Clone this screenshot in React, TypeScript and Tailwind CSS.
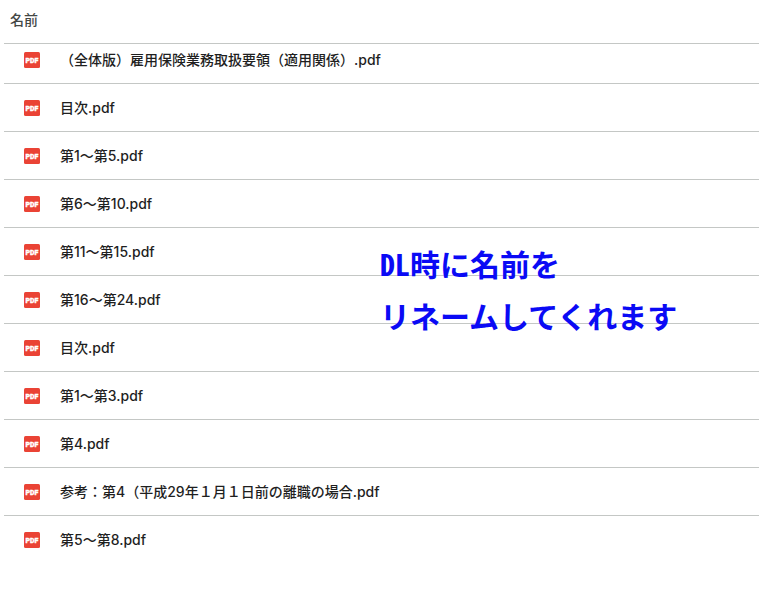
const files = [
  '（全体版）雇用保険業務取扱要領（適用関係）.pdf',
  '目次.pdf',
  '第1～第5.pdf',
  '第6～第10.pdf',
  '第11～第15.pdf',
  '第16～第24.pdf',
  '目次.pdf',
  '第1～第3.pdf',
  '第4.pdf',
  '参考：第4（平成29年１月１日前の離職の場合.pdf',
  '第5～第8.pdf',
]

function PdfIcon() {
  return (
    <svg viewBox="0 0 16 16" className="h-4 w-4 shrink-0" aria-hidden="true">
      <rect width="16" height="16" rx="1.5" fill="#ea4335" />
      <text
        x="8"
        y="10.5"
        textAnchor="middle"
        fill="#ffffff"
        stroke="#ffffff"
        strokeWidth="0.3"
        className="font-['Roboto',sans-serif] text-[7px] font-black"
      >
        PDF
      </text>
    </svg>
  )
}

function FileRow({ name, first, last }: { name: string; first: boolean; last: boolean }) {
  return (
    <tr className={last ? '' : 'border-b border-[#c4c7c5]'}>
      <td className={`px-5 pb-[13px] ${first ? 'pt-1.5' : 'pt-3.5'}`}>
        <div className="flex h-5 items-center gap-5">
          <PdfIcon />
          <span className="whitespace-nowrap">{name}</span>
        </div>
      </td>
    </tr>
  )
}

export default function App() {
  return (
    <main className="relative min-h-screen bg-white pl-1 font-['Inter','Noto_Sans_CJK_JP',sans-serif] text-sm leading-5 font-medium text-[#1f1f1f]">
      <table className="w-full border-collapse">
        <thead>
          <tr className="border-b border-[#c4c7c5]">
            <th scope="col" className="px-1.5 pt-2.5 pb-[13px] text-left font-medium text-[#444746]">
              名前
            </th>
          </tr>
        </thead>
        <tbody>
          {files.map((name, i) => (
            <FileRow key={i} name={name} first={i === 0} last={i === files.length - 1} />
          ))}
        </tbody>
      </table>

      <p className="absolute top-[237px] left-[380px] font-['Noto_Sans_CJK_JP',sans-serif] text-[30px] leading-[52px] font-bold whitespace-nowrap text-[#0a0af5] [font-feature-settings:'hwid']">
        DL時に名前を
        <br />
        リネームしてくれます
      </p>
    </main>
  )
}
